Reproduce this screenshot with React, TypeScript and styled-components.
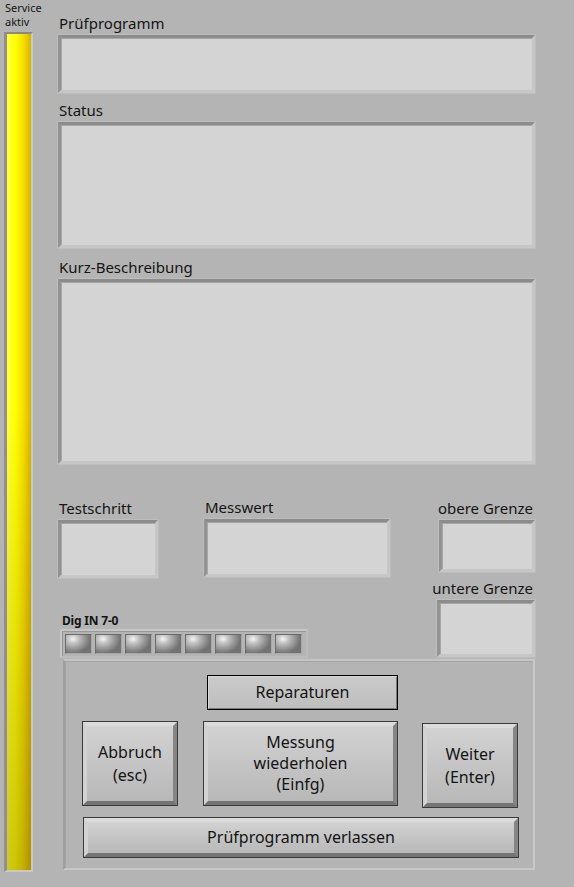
import * as React from "react";
import styled, { createGlobalStyle } from "styled-components";

const colors = {
  panel: "#b4b4b4",
  display: "#d4d4d4",
  text: "#141414",
  bevelDark: "#8c8c8c",
  bevelLight: "#c6c6c6",
  outline: "#3a3a3a",
};

const GlobalStyle = createGlobalStyle`
  html, body {
    margin: 0;
    padding: 0;
    background: ${colors.panel};
  }
  body {
    font-family: "Noto Sans", "Open Sans", sans-serif;
    color: ${colors.text};
  }
`;

const Page = styled.div`
  width: 574px;
  height: 887px;
  display: flex;
  flex-flow: row nowrap;
  background: ${colors.panel};
`;

const SideColumn = styled.div`
  width: 58px;
  flex: none;
  display: flex;
  flex-flow: column nowrap;
  padding-left: 4px;
  box-sizing: border-box;
`;

const SideLabel = styled.div`
  font-size: 11px;
  line-height: 14px;
  height: 32px;
  padding: 1px 0 0 1px;
  box-sizing: border-box;
`;

const Tank = styled.div`
  width: 29px;
  height: 840px;
  box-sizing: border-box;
  border-style: solid;
  border-width: 2px 2px 2px 3px;
  border-color: #8a8a8a #c8c8c8 #c8c8c8 #909090;
  background:
    linear-gradient(to bottom, rgba(0, 0, 0, 0) 0%, rgba(0, 0, 0, 0) 45%, rgba(70, 50, 0, 0.28) 100%),
    linear-gradient(to right, #ffff40 0%, #ffff00 35%, #f4dc00 70%, #d6b400 100%);
`;

const Main = styled.div`
  width: 477px;
  flex: none;
  display: flex;
  flex-flow: column nowrap;
`;

const FieldLabel = styled.div<{ $top: number }>`
  font-size: 15px;
  line-height: 20px;
  padding-top: ${(p) => p.$top}px;
  padding-bottom: 2px;
  padding-left: 1px;
  white-space: nowrap;
`;

const Display = styled.div<{ $w?: number; $h: number }>`
  width: ${(p) => (p.$w ? `${p.$w}px` : "100%")};
  height: ${(p) => p.$h}px;
  box-sizing: border-box;
  background: ${colors.display};
  border-style: solid;
  border-width: 3px;
  border-color: ${colors.bevelDark} ${colors.bevelLight} ${colors.bevelLight} #939393;
  box-shadow: inset 1px 1px 0 #a6a6a6, 0 0 0 1px #bdbdbd;
`;

const Lower = styled.div`
  display: flex;
  flex-flow: row nowrap;
  justify-content: space-between;
  padding-bottom: 1px;
`;

const LeftBlock = styled.div`
  display: flex;
  flex-flow: column nowrap;
`;

const ValueRow = styled.div`
  display: flex;
  flex-flow: row nowrap;
  gap: 46px;
`;

const ValueCol = styled.div`
  display: flex;
  flex-flow: column nowrap;
`;

const DigLabel = styled.div`
  font-size: 12px;
  font-weight: bold;
  line-height: 14px;
  padding: 36px 0 1px 4px;
  letter-spacing: -0.2px;
`;

const LedFrame = styled.div`
  width: 248px;
  height: 29px;
  margin-left: 2px;
  box-sizing: border-box;
  display: flex;
  flex-flow: row nowrap;
  align-items: center;
  gap: 3px;
  padding: 1px 0 0 3px;
  border-style: solid;
  border-width: 2px;
  border-color: #c6c6c6 #bcbcbc #bcbcbc #c6c6c6;
  box-shadow: inset 1px 1px 0 #989898;
`;

const Led = styled.div`
  width: 27px;
  height: 20px;
  box-sizing: border-box;
  border-style: solid;
  border-width: 1px;
  border-color: #6c6c6c #a8a8a8 #a8a8a8 #6c6c6c;
  background: radial-gradient(
    ellipse 70% 80% at 28% 22%,
    #f6f6f6 0%,
    #c4c4c4 30%,
    #9a9a9a 65%,
    #727272 100%
  );
`;

const LimitCol = styled.div`
  width: 99px;
  display: flex;
  flex-flow: column nowrap;
  align-items: flex-end;
`;

const LimitLabel = styled(FieldLabel)`
  padding-right: 2px;
  text-align: right;
`;

const ButtonPanel = styled.div`
  width: 472px;
  height: 211px;
  margin-left: 5px;
  box-sizing: border-box;
  padding: 14px 0 0 17px;
  border-style: solid;
  border-width: 2px;
  border-color: #c6c6c6 #c8c8c8 #c8c8c8 #a0a0a0;
  box-shadow: inset 1px 1px 0 #a4a4a4;
  display: grid;
  grid-template-columns: 96px 196px 96px;
  grid-template-rows: 35px 85px 41px;
  column-gap: 24px;
  row-gap: 11px;
  align-content: start;
`;

const Button = styled.button<{ $shift?: number; $focused?: boolean }>`
  all: unset;
  box-sizing: border-box;
  display: flex;
  cursor: pointer;
  border: 1px solid ${(p) => (p.$focused ? "#000" : colors.outline)};
  transform: translateY(${(p) => p.$shift || 0}px);
`;

const WideButton = styled(Button)`
  grid-column: 1 / -1;
  margin: 0 -1px 0 1px;
`;

const MiddleButton = styled(Button)`
  width: 195px;
  justify-self: end;
`;

const Face = styled.span<{ $flat?: boolean }>`
  flex: 1;
  display: flex;
  align-items: center;
  justify-content: center;
  text-align: center;
  font-family: "Noto Sans", "Open Sans", sans-serif;
  font-size: 16px;
  line-height: 23px;
  color: ${colors.text};
  border-style: solid;
  border-width: ${(p) => (p.$flat ? "1px" : "4px")};
  border-color: ${(p) =>
    p.$flat ? "#d8d8d8 #7c7c7c #7c7c7c #d8d8d8" : "#dcdcdc #858585 #747474 #d2d2d2"};
  background: ${(p) =>
    p.$flat
      ? "linear-gradient(#cacaca, #bebebe)"
      : "linear-gradient(#d2d2d2, #c2c2c2 60%, #b8b8b8)"};
`;

const Tight = styled.span`
  line-height: 21px;
`;

const RepairCell = styled.div`
  grid-column: 2;
  display: flex;
  justify-content: flex-end;
`;

const RepairButton = styled(Button)`
  width: 191px;
`;

export default function App() {
  const leds = Array.from({ length: 8 }, (_, i) => <Led key={i} />);

  return (
    <Page>
      <GlobalStyle />
      <SideColumn>
        <SideLabel>
          Service
          <br />
          aktiv
        </SideLabel>
        <Tank />
      </SideColumn>
      <Main>
        <FieldLabel $top={13}>Prüfprogramm</FieldLabel>
        <Display $h={58} />
        <FieldLabel $top={7}>Status</FieldLabel>
        <Display $h={126} />
        <FieldLabel $top={9}>Kurz-Beschreibung</FieldLabel>
        <Display $h={185} />
        <Lower>
          <LeftBlock>
            <ValueRow>
              <ValueCol>
                <FieldLabel $top={34}>Testschritt</FieldLabel>
                <Display $w={100} $h={58} />
              </ValueCol>
              <ValueCol>
                <FieldLabel $top={33}>Messwert</FieldLabel>
                <Display $w={186} $h={58} />
              </ValueCol>
            </ValueRow>
            <DigLabel>Dig IN 7-0</DigLabel>
            <LedFrame>{leds}</LedFrame>
          </LeftBlock>
          <LimitCol>
            <LimitLabel $top={34}>obere Grenze</LimitLabel>
            <Display $w={96} $h={52} />
            <LimitLabel $top={6}>untere Grenze</LimitLabel>
            <Display $w={98} $h={57} />
          </LimitCol>
        </Lower>
        <ButtonPanel>
          <RepairCell>
            <RepairButton $focused>
              <Face $flat>Reparaturen</Face>
            </RepairButton>
          </RepairCell>
          <span />
          <Button>
            <Face>
              Abbruch
              <br />
              (esc)
            </Face>
          </Button>
          <MiddleButton>
            <Face>
              <Tight>
                Messung
                <br />
                wiederholen
                <br />
                (Einfg)
              </Tight>
            </Face>
          </MiddleButton>
          <Button $shift={2}>
            <Face>
              Weiter
              <br />
              (Enter)
            </Face>
          </Button>
          <WideButton>
            <Face>Prüfprogramm verlassen</Face>
          </WideButton>
        </ButtonPanel>
      </Main>
    </Page>
  );
}
